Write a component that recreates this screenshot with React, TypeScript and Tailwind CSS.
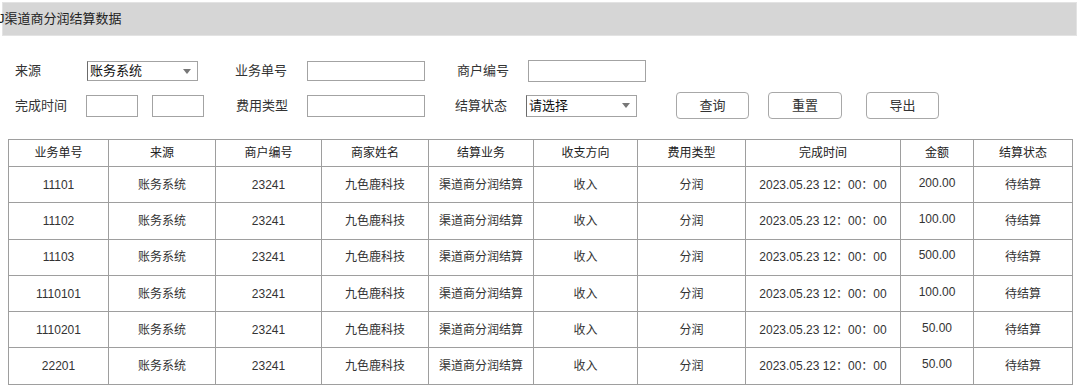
const FONT = { fontFamily: '"Liberation Sans", "Noto Sans CJK SC", sans-serif' };

const columns = [
  { title: '业务单号', width: 'w-[100px]' },
  { title: '来源', width: 'w-[107px]' },
  { title: '商户编号', width: 'w-[106px]' },
  { title: '商家姓名', width: 'w-[107px]' },
  { title: '结算业务', width: 'w-[105px]' },
  { title: '收支方向', width: 'w-[104px]' },
  { title: '费用类型', width: 'w-[108px]' },
  { title: '完成时间', width: 'w-[155px]' },
  { title: '金额', width: 'w-[73px]' },
  { title: '结算状态', width: 'w-[99px]' },
];

const rows = [
  { id: '11101', amount: '200.00' },
  { id: '11102', amount: '100.00' },
  { id: '11103', amount: '500.00' },
  { id: '1110101', amount: '100.00' },
  { id: '1110201', amount: '50.00' },
  { id: '22201', amount: '50.00' },
];

function Select({ value, className }: { value: string; className: string }) {
  return (
    <div
      className={`flex items-center justify-between border border-[#a3a3a3] border-l-[#6b6b6b] bg-white pl-[2px] pr-[6px] text-[13px] text-[#111] ${className}`}
    >
      <span>{value}</span>
      <span className="h-0 w-0 border-x-[4px] border-t-[5px] border-x-transparent border-t-[#777]" />
    </div>
  );
}

function Input({ className }: { className: string }) {
  return <div className={`border border-[#a3a3a3] bg-white ${className}`} />;
}

function Button({ label, className }: { label: string; className: string }) {
  return (
    <button
      type="button"
      className={`flex h-[27px] items-center justify-center rounded-[4px] border border-[#a8a8a8] bg-white text-[13px] text-[#333] ${className}`}
    >
      {label}
    </button>
  );
}

export default function App() {
  return (
    <div className="h-[389px] w-[1080px] overflow-hidden bg-white" style={FONT}>
      {/* title bar */}
      <div className="ml-[2px] mr-[3px] mt-[2px] flex h-[34px] items-center border border-[#e3e3e3] bg-[#d6d6d6]">
        <span className="-ml-[5px] text-[13px] text-[#222]">J渠道商分润结算数据</span>
      </div>

      {/* filters */}
      <div className="mt-[24px] flex h-[22px] items-center pl-[15px] text-[13px] text-[#333]">
        <span className="w-[72px]">来源</span>
        <Select value="账务系统" className="h-[20px] w-[111px]" />
        <span className="ml-[37px] w-[72px]">业务单号</span>
        <Input className="h-[20px] w-[118px]" />
        <span className="ml-[32px] w-[71px]">商户编号</span>
        <Input className="h-[22px] w-[118px]" />
      </div>

      <div className="mt-[10px] flex h-[27px] items-center pl-[15px] text-[13px] text-[#333]">
        <span className="w-[71px]">完成时间</span>
        <Input className="h-[22px] w-[52px]" />
        <Input className="ml-[14px] h-[22px] w-[52px]" />
        <span className="ml-[32px] w-[71px]">费用类型</span>
        <Input className="h-[22px] w-[118px]" />
        <span className="ml-[30px] w-[71px]">结算状态</span>
        <Select value="请选择" className="h-[22px] w-[111px]" />
        <Button label="查询" className="ml-[39px] w-[73px]" />
        <Button label="重置" className="ml-[19px] w-[74px]" />
        <Button label="导出" className="ml-[24px] w-[73px]" />
      </div>

      {/* table */}
      <table className="ml-[8px] mt-[20px] table-fixed border-collapse text-[12px] text-[#333]">
        <thead>
          <tr className="h-[27px]">
            {columns.map((c) => (
              <th key={c.title} className={`${c.width} border border-[#9e9e9e] p-0 font-normal text-[#222]`}>
                {c.title}
              </th>
            ))}
          </tr>
        </thead>
        <tbody>
          {rows.map((r) => (
            <tr key={r.id} className="h-[36.3px]">
              <td className="border border-[#9e9e9e] p-0 text-center">{r.id}</td>
              <td className="border border-[#9e9e9e] p-0 text-center">账务系统</td>
              <td className="border border-[#9e9e9e] p-0 text-center">23241</td>
              <td className="border border-[#9e9e9e] p-0 text-center">九色鹿科技</td>
              <td className="border border-[#9e9e9e] p-0 text-center">渠道商分润结算</td>
              <td className="border border-[#9e9e9e] p-0 text-center">收入</td>
              <td className="border border-[#9e9e9e] p-0 text-center">分润</td>
              <td className="border border-[#9e9e9e] p-0 text-center">2023.05.23 12：00：00</td>
              <td className="border border-[#9e9e9e] p-0 pb-[4px] text-center">{r.amount}</td>
              <td className="border border-[#9e9e9e] p-0 text-center">待结算</td>
            </tr>
          ))}
        </tbody>
      </table>
    </div>
  );
}
